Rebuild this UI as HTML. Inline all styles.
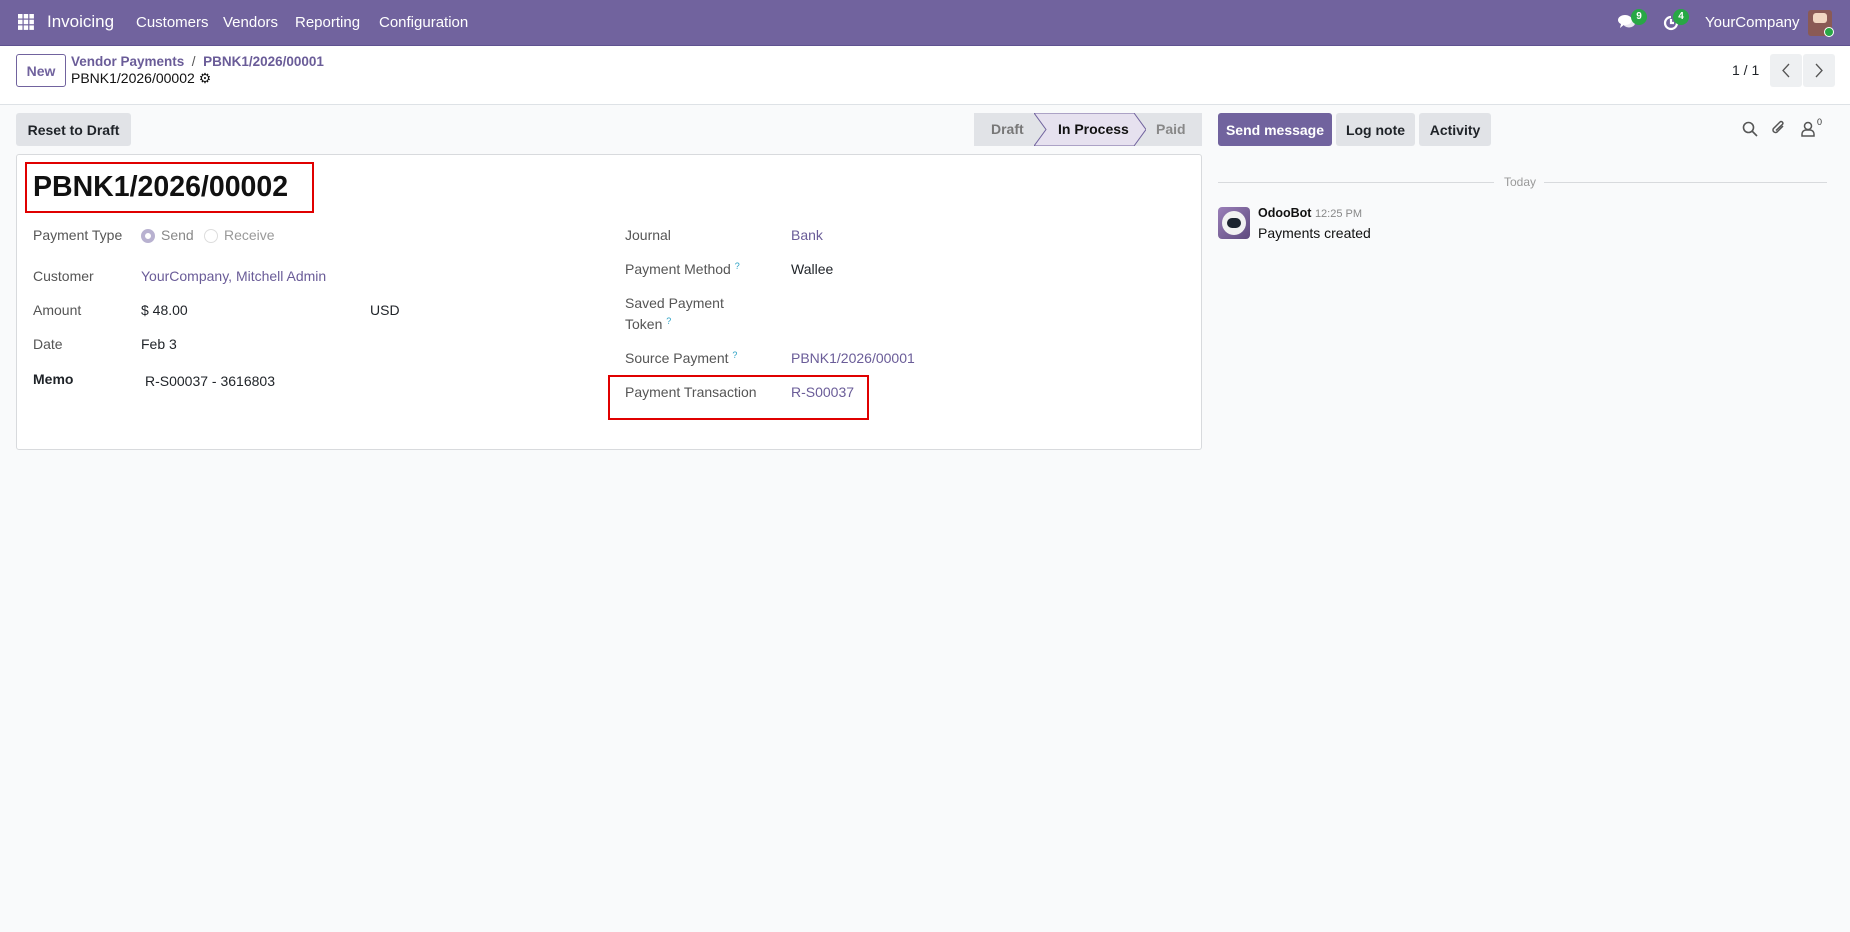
<!DOCTYPE html>
<html><head><meta charset="utf-8"><style>
*{box-sizing:border-box;margin:0;padding:0}
body{width:1850px;height:932px;background:#f9fafb;font-family:"Liberation Sans","DejaVu Sans",sans-serif;font-size:13.5px;color:#1f2328;position:relative;overflow:hidden}
.a{position:absolute;white-space:nowrap}
.nav{position:absolute;left:0;top:0;width:1850px;height:46px;background:#71639e;border-bottom:1px solid #5f5290}
.nav .a{color:#fff;font-size:15px;top:14px}
.cp{position:absolute;left:0;top:46px;width:1850px;height:59px;background:#fff;border-bottom:1px solid #dee2e6}
.btn{position:absolute;border-radius:3px;font-weight:bold;font-size:14px;display:flex;align-items:center;justify-content:center}
.gray{background:#e1e3e7;color:#1f2328}
.lbl{color:#555;font-size:14px}
.val{font-size:14px;color:#1f2328}
.link{color:#6a5c98;font-size:14px}
.q{color:#2aa0c4;font-size:9px;vertical-align:top}
.bdg{position:absolute;background:#28a745;color:#fff;border-radius:9px;font-size:10px;font-weight:bold;width:16px;height:16px;text-align:center;line-height:16px}
</style></head><body>
<div class="nav">
 <svg class="a" style="left:18px;top:14px" width="16" height="16" viewBox="0 0 16 16" fill="#fff"><rect x="0" y="0" width="4.5" height="4.5"/><rect x="5.7" y="0" width="4.5" height="4.5"/><rect x="11.4" y="0" width="4.5" height="4.5"/><rect x="0" y="5.7" width="4.5" height="4.5"/><rect x="5.7" y="5.7" width="4.5" height="4.5"/><rect x="11.4" y="5.7" width="4.5" height="4.5"/><rect x="0" y="11.4" width="4.5" height="4.5"/><rect x="5.7" y="11.4" width="4.5" height="4.5"/><rect x="11.4" y="11.4" width="4.5" height="4.5"/></svg>
 <div class="a" style="left:47px;top:12px;font-size:17px">Invoicing</div>
 <div class="a" style="left:136px">Customers</div>
 <div class="a" style="left:223px">Vendors</div>
 <div class="a" style="left:295px">Reporting</div>
 <div class="a" style="left:379px">Configuration</div>
 <svg class="a" style="left:1618px;top:14px" width="18" height="16" viewBox="0 0 18 16" fill="#fff"><ellipse cx="7" cy="6" rx="7" ry="5"/><path d="M3 10 L2 14 L7 10z"/><ellipse cx="11" cy="9" rx="6" ry="4.5" opacity=".85"/></svg>
 <div class="bdg" style="left:1631px;top:9px">9</div>
 <svg class="a" style="left:1662px;top:14px" width="18" height="18" viewBox="0 0 18 18" fill="none" stroke="#fff" stroke-width="2.2"><path d="M15 9a6 6 0 1 1-6-6"/><path d="M9 5v4h3"/></svg>
 <div class="bdg" style="left:1673px;top:9px">4</div>
 <div class="a" style="left:1705px">YourCompany</div>
 <div class="a" style="top:10px;width:24px;height:26px;background:#8a5a55;border-radius:3px;left:1808px"></div>
 <div class="a" style="left:1813px;top:13px;width:14px;height:10px;background:#f1d7c2;border-radius:3px"></div>
 <div class="a" style="left:1824px;top:27px;width:10px;height:10px;background:#28a745;border-radius:50%;border:1.5px solid #fff"></div>
</div>
<div class="cp">
 <div class="btn" style="left:16px;top:8px;height:33px;border:1px solid #71639e;color:#71639e;background:#fff;width:50px">New</div>
 <div class="a" style="left:71px;top:8px;font-size:13.5px;font-weight:bold;color:#6a5c98">Vendor Payments <span style="color:#555;font-weight:normal">&nbsp;/&nbsp;</span> PBNK1/2026/00001</div>
 <div class="a" style="left:71px;top:24px;font-size:14px;color:#111">PBNK1/2026/00002 <span style="font-size:14px">⚙</span></div>
 <div class="a" style="left:1732px;top:16px;font-size:14px">1 / 1</div>
 <svg class="a" style="left:1770px;top:8px" width="65" height="33"><rect x="0" y="0" width="32" height="33" rx="3" fill="#eef0f2"/><rect x="33" y="0" width="32" height="33" rx="3" fill="#eef0f2"/><path d="M19 10l-6 6.5 6 6.5M46 10l6 6.5-6 6.5" fill="none" stroke="#555" stroke-width="1.3"/></svg>
</div>
<div class="btn gray" style="left:16px;top:113px;width:115px;height:33px">Reset to Draft</div>
<div class="a" style="left:974px;top:113px;width:228px;height:33px;background:#e1e3e7"></div>
<svg class="a" style="left:1034px;top:113px" width="112" height="33"><path d="M0 0 H100 L112 16.5 L100 33 H0 L12 16.5z" fill="#e6e1ef" stroke="#71639e" stroke-width="1"/></svg>
<div class="a" style="left:991px;top:121px;font-size:14px;color:#777;font-weight:bold">Draft</div>
<div class="a" style="left:1058px;top:121px;font-size:14px;font-weight:bold;color:#111">In Process</div>
<div class="a" style="left:1156px;top:121px;font-size:14px;color:#888;font-weight:bold">Paid</div>
<div class="a" style="left:16px;top:154px;width:1186px;height:296px;background:#fff;border:1px solid #d8dadd;border-radius:3px"></div>
<div class="a" style="left:25px;top:162px;width:289px;height:51px;border:2px solid #e00000"></div>
<div class="a" style="left:33px;top:171px;font-size:28.5px;font-weight:bold;color:#111">PBNK1/2026/00002</div>
<div class="a lbl" style="left:33px;top:227px">Payment Type</div>
<div class="a" style="left:141px;top:229px;width:14px;height:14px;border-radius:50%;border:4px solid #b8b1d0;background:#fff"></div>
<div class="a" style="left:161px;top:227px;font-size:14px;color:#888">Send</div>
<div class="a" style="left:204px;top:229px;width:14px;height:14px;border-radius:50%;border:1px solid #ddd;background:#fff"></div>
<div class="a" style="left:224px;top:227px;font-size:14px;color:#999">Receive</div>
<div class="a lbl" style="left:33px;top:268px">Customer</div>
<div class="a link" style="left:141px;top:268px">YourCompany, Mitchell Admin</div>
<div class="a lbl" style="left:33px;top:302px">Amount</div>
<div class="a val" style="left:141px;top:302px">$ 48.00</div>
<div class="a val" style="left:370px;top:302px">USD</div>
<div class="a lbl" style="left:33px;top:336px">Date</div>
<div class="a val" style="left:141px;top:336px">Feb 3</div>
<div class="a val" style="left:33px;top:371px;font-weight:bold">Memo</div>
<div class="a val" style="left:145px;top:373px">R-S00037 - 3616803</div>
<div class="a lbl" style="left:625px;top:227px">Journal</div>
<div class="a link" style="left:791px;top:227px">Bank</div>
<div class="a lbl" style="left:625px;top:261px">Payment Method <span class="q">?</span></div>
<div class="a val" style="left:791px;top:261px">Wallee</div>
<div class="a lbl" style="left:625px;top:295px">Saved Payment</div>
<div class="a lbl" style="left:625px;top:316px">Token <span class="q">?</span></div>
<div class="a lbl" style="left:625px;top:350px">Source Payment <span class="q">?</span></div>
<div class="a link" style="left:791px;top:350px">PBNK1/2026/00001</div>
<div class="a" style="left:608px;top:375px;width:261px;height:45px;border:2px solid #e00000"></div>
<div class="a lbl" style="left:625px;top:384px">Payment Transaction</div>
<div class="a link" style="left:791px;top:384px">R-S00037</div>
<div class="btn" style="left:1218px;top:113px;width:114px;height:33px;background:#71639e;color:#fff">Send message</div>
<div class="btn gray" style="left:1336px;top:113px;width:79px;height:33px">Log note</div>
<div class="btn gray" style="left:1419px;top:113px;width:72px;height:33px">Activity</div>
<svg class="a" style="left:1742px;top:121px" width="16" height="16" fill="none" stroke="#555" stroke-width="1.6"><circle cx="6.5" cy="6.5" r="5"/><path d="M10 10l5 5"/></svg>
<svg class="a" style="left:1771px;top:119px" width="16" height="18" fill="none" stroke="#555" stroke-width="1.5"><path d="M12 7L6 13a2.5 2.5 0 0 1-3.5-3.5L9 3a1.7 1.7 0 0 1 2.4 2.4L5 11.5"/></svg>
<svg class="a" style="left:1801px;top:121px" width="14" height="16" fill="none" stroke="#555" stroke-width="1.5"><circle cx="7" cy="5" r="3.5"/><path d="M1 15v-2a4 4 0 0 1 4-4h4a4 4 0 0 1 4 4v2z"/></svg>
<div class="a" style="left:1817px;top:117px;font-size:9px;color:#333">0</div>
<div class="a" style="left:1218px;top:182px;width:276px;height:1px;background:#d8dadd"></div>
<div class="a" style="left:1544px;top:182px;width:283px;height:1px;background:#d8dadd"></div>
<div class="a" style="left:1504px;top:175px;font-size:12px;color:#999">Today</div>
<div class="a" style="left:1218px;top:207px;width:32px;height:32px;border-radius:4px;background:linear-gradient(135deg,#9a7fb8,#5e4a7e)"></div>
<div class="a" style="left:1222px;top:211px;width:24px;height:24px;border-radius:50%;background:#f2f2f2"></div>
<div class="a" style="left:1227px;top:218px;width:14px;height:10px;border-radius:5px;background:#1d2430"></div>
<div class="a" style="left:1258px;top:206px;font-size:12.5px;font-weight:bold;color:#111">OdooBot <span style="font-weight:normal;color:#888;font-size:11px">12:25 PM</span></div>
<div class="a" style="left:1258px;top:225px;font-size:14px;color:#111">Payments created</div>
</body></html>
